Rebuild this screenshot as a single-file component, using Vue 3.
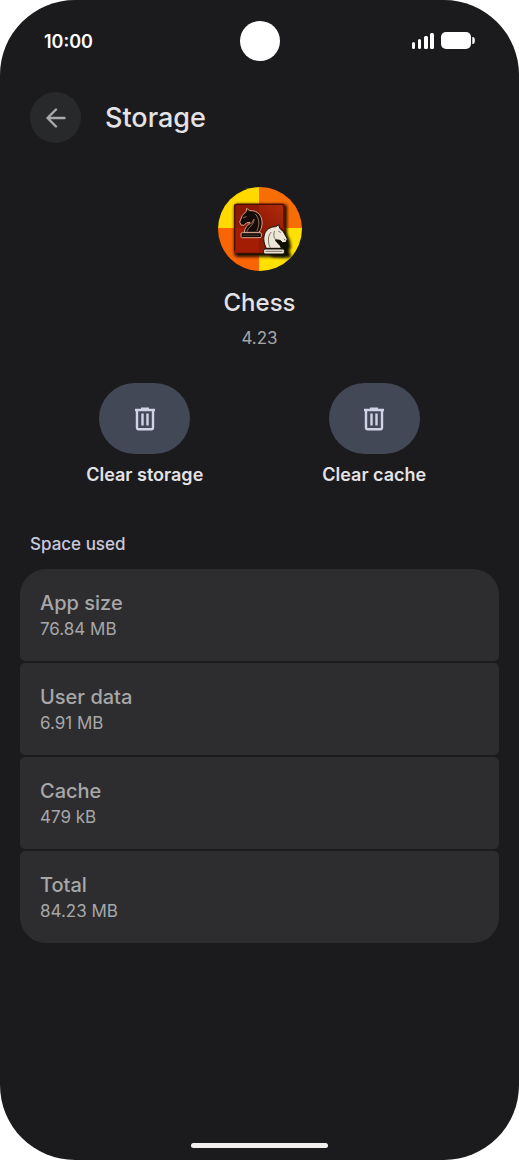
<script setup>
const actions = ['Clear storage', 'Clear cache']
const usage = [
  { label: 'App size', value: '76.84 MB' },
  { label: 'User data', value: '6.91 MB' },
  { label: 'Cache', value: '479 kB' },
  { label: 'Total', value: '84.23 MB' },
]
</script>

<template>
  <div class="phone">
    <div class="status">
      <span class="time">10:00</span>
      <span class="camera"></span>
      <span class="indicators">
        <svg width="22" height="18" viewBox="0 0 22 18" fill="#fff" aria-hidden="true">
          <rect x="0" y="10" width="3" height="7" rx="1.500" />
          <rect x="6" y="7" width="3" height="10" rx="1.500" />
          <rect x="12" y="4" width="4" height="13" rx="1.500" />
          <rect x="18" y="1" width="4" height="16" rx="1.500" />
        </svg>
        <svg width="34" height="18" viewBox="0 0 34 18" fill="#fff" aria-hidden="true">
          <rect x="0" y="0" width="30" height="17" rx="5" />
          <path d="M31.300 5c2 0 2.500 1 2.500 3.500S33.300 12 31.300 12z" />
        </svg>
      </span>
    </div>

    <header class="bar">
      <button class="back" type="button" aria-label="Back">
        <svg width="20" height="20" viewBox="0 0 20 20" fill="none" stroke="#aaaaac" stroke-width="2.400" stroke-linecap="round" stroke-linejoin="round">
          <path d="M18.500 10H1.500M10 1.500L1.500 10L10 18.500" />
        </svg>
      </button>
      <h1>Storage</h1>
    </header>

    <main>
      <section class="app">
        <svg class="logo" viewBox="25 21 252 252" aria-hidden="true">
          <defs>
            <clipPath id="disc"><circle cx="151" cy="147" r="126" /></clipPath>
            <filter id="soft" x="-20%" y="-20%" width="140%" height="140%"><feGaussianBlur stdDeviation="4" /></filter>
            <linearGradient id="lit" x1="0" y1="1" x2="1" y2="0">
              <stop offset="0" stop-color="#8c1a04" />
              <stop offset="1" stop-color="#b32a0a" />
            </linearGradient>
          </defs>
          <g clip-path="url(#disc)">
            <rect x="25" y="21" width="123" height="123" fill="#ffd900" />
            <rect x="148" y="21" width="129" height="123" fill="#f96d05" />
            <rect x="25" y="144" width="123" height="129" fill="#f96505" />
            <rect x="148" y="144" width="129" height="129" fill="#ffe000" />
            <rect x="74" y="73" width="158" height="157" rx="10" fill="#180700" filter="url(#soft)" />
            <rect x="73" y="71" width="152" height="149" rx="8" fill="#8c1a04" />
            <path d="M148 74h68q6 0 6 6v64h-74z" fill="url(#lit)" />
            <path d="M75 144h73v73H81q-6 0-6-6z" fill="#a31c04" />
            <path d="M75 213V80q0-7 7-7h134q7 0 7 7v62" fill="none" stroke="#4b1005" stroke-width="4" />
            <path d="M168 207c8-12 17-19 17-28l-17 3-2-13 17-25 5-6 6 3 20 7 19 27 4 24-6 7 7 23-58-3z" fill="#100700" filter="url(#soft)" transform="translate(7 4)" />
            <g stroke="#d9a68e" stroke-width="3" stroke-linejoin="round" fill="#150c09">
              <path d="M104 157c0-14 12-22 17-30l-11 2-7 7-9-1-4-9 8-20 11-11 2-10 9 7c17-1 30 7 35 22 5 17 1 32-7 43z" />
              <rect x="94" y="158" width="61" height="15" rx="4" />
            </g>
            <path d="M112 154c2-13 22-18 21-37l-7 12-14 8M102 113l7-3M138 103c12 14 12 31 4 49" fill="none" stroke="#9c6d57" stroke-width="3" stroke-linecap="round" />
            <path d="M101 166h47" stroke="#594a43" stroke-width="2" />
            <g stroke="#171009" stroke-width="3" stroke-linejoin="round" fill="#eee7d8">
              <path d="M170 205c-9-18-10-34-3-48 7-12 19-17 31-17l9-6 3 11 11 10 12 22-4 10-10 1-8-7-14-2c3 11 17 14 18 26z" />
              <rect x="162" y="207" width="62" height="15" rx="4" />
            </g>
            <path d="M181 202c-7-18-7-33 3-45M194 154c-4 14 0 21 5 26M207 154l5 3M224 177l2 3M169 214h48" fill="none" stroke="#75695a" stroke-width="3" stroke-linecap="round" />
          </g>
        </svg>
        <h2>Chess</h2>
        <p class="version">4.23</p>
      </section>

      <div class="actions">
        <button v-for="name in actions" :key="name" class="action" type="button">
          <span class="pill">
            <svg width="22" height="24" viewBox="0 0 22 24" fill="none" stroke="#d0d2e5" stroke-width="2.400" aria-hidden="true">
              <path d="M1 3h20M7 1.700h8" />
              <path d="M3 3v17.500q0 1.700 1.700 1.700h12.600q1.700 0 1.700-1.700V3M8.500 6.500v12M13.500 6.500v12" />
            </svg>
          </span>
          <span>{{ name }}</span>
        </button>
      </div>

      <h3>Space used</h3>
      <dl class="cards">
        <div v-for="item in usage" :key="item.label" class="card">
          <dt>{{ item.label }}</dt>
          <dd>{{ item.value }}</dd>
        </div>
      </dl>
    </main>
    <div class="handle"></div>
  </div>
</template>

<style>
body {
  margin: 0;
  background: #fff;
}
</style>

<style scoped>
.phone {
  box-sizing: border-box;
  min-height: 100vh;
  display: flex;
  flex-direction: column;
  background: #1b1b1d;
  border-radius: 75px;
  color: #e4e2e5;
  font-family: Inter, "Open Sans", sans-serif;
  overflow: hidden;
}
h1, h2, h3, p, dl, dd {
  margin: 0;
}
button {
  border: 0;
  padding: 0;
  font: inherit;
  color: inherit;
  background: none;
}
.status {
  display: grid;
  grid-template-columns: 1fr 40px 1fr;
  align-items: center;
  height: 40px;
  padding: 21px 44px 0;
}
.time {
  color: #fff;
  font-size: 18px;
  font-weight: 600;
}
.camera {
  width: 40px;
  height: 40px;
  border-radius: 50%;
  background: #fff;
}
.indicators {
  display: flex;
  justify-content: flex-end;
  gap: 7px;
}
.bar {
  display: flex;
  align-items: center;
  gap: 24px;
  padding: 31px 30px 0;
}
.back {
  display: grid;
  place-items: center;
  width: 51px;
  height: 51px;
  border-radius: 50%;
  background: #28292b;
}
h1 {
  font-size: 27px;
  line-height: 36px;
  font-weight: 500;
}
.app {
  display: flex;
  flex-direction: column;
  align-items: center;
  padding-top: 44px;
}
.logo {
  width: 84px;
  height: 84px;
}
h2 {
  margin-top: 14px;
  font-size: 24px;
  line-height: 36px;
  font-weight: 500;
}
.version {
  margin-top: 5px;
  color: #a5a5a7;
  font-size: 17px;
  line-height: 24px;
}
.actions {
  display: grid;
  grid-template-columns: 1fr 1fr;
  padding: 33px 30px 0;
}
.action {
  display: flex;
  flex-direction: column;
  align-items: center;
  gap: 9px;
  font-size: 18px;
  line-height: 24px;
  font-weight: 600;
}
.pill {
  display: grid;
  place-items: center;
  width: 91px;
  height: 71px;
  border-radius: 36px;
  background: #434857;
}
h3 {
  margin: 45px 30px 0;
  color: #c9c8dc;
  font-size: 17px;
  line-height: 24px;
  font-weight: 500;
}
.cards {
  display: flex;
  flex-direction: column;
  gap: 2px;
  margin: 13px 20px 0;
  border-radius: 26px;
  overflow: hidden;
}
.card {
  box-sizing: border-box;
  min-height: 92px;
  padding: 20px;
  border-radius: 5px;
  background: #2d2d2f;
  color: #a7a7a9;
}
dt {
  font-size: 20px;
  line-height: 28px;
  font-weight: 500;
}
dd {
  font-size: 17px;
  line-height: 24px;
}
.handle {
  width: 137px;
  height: 5px;
  margin: auto auto 12px;
  border-radius: 3px;
  background: #f1f0ef;
}
</style>
